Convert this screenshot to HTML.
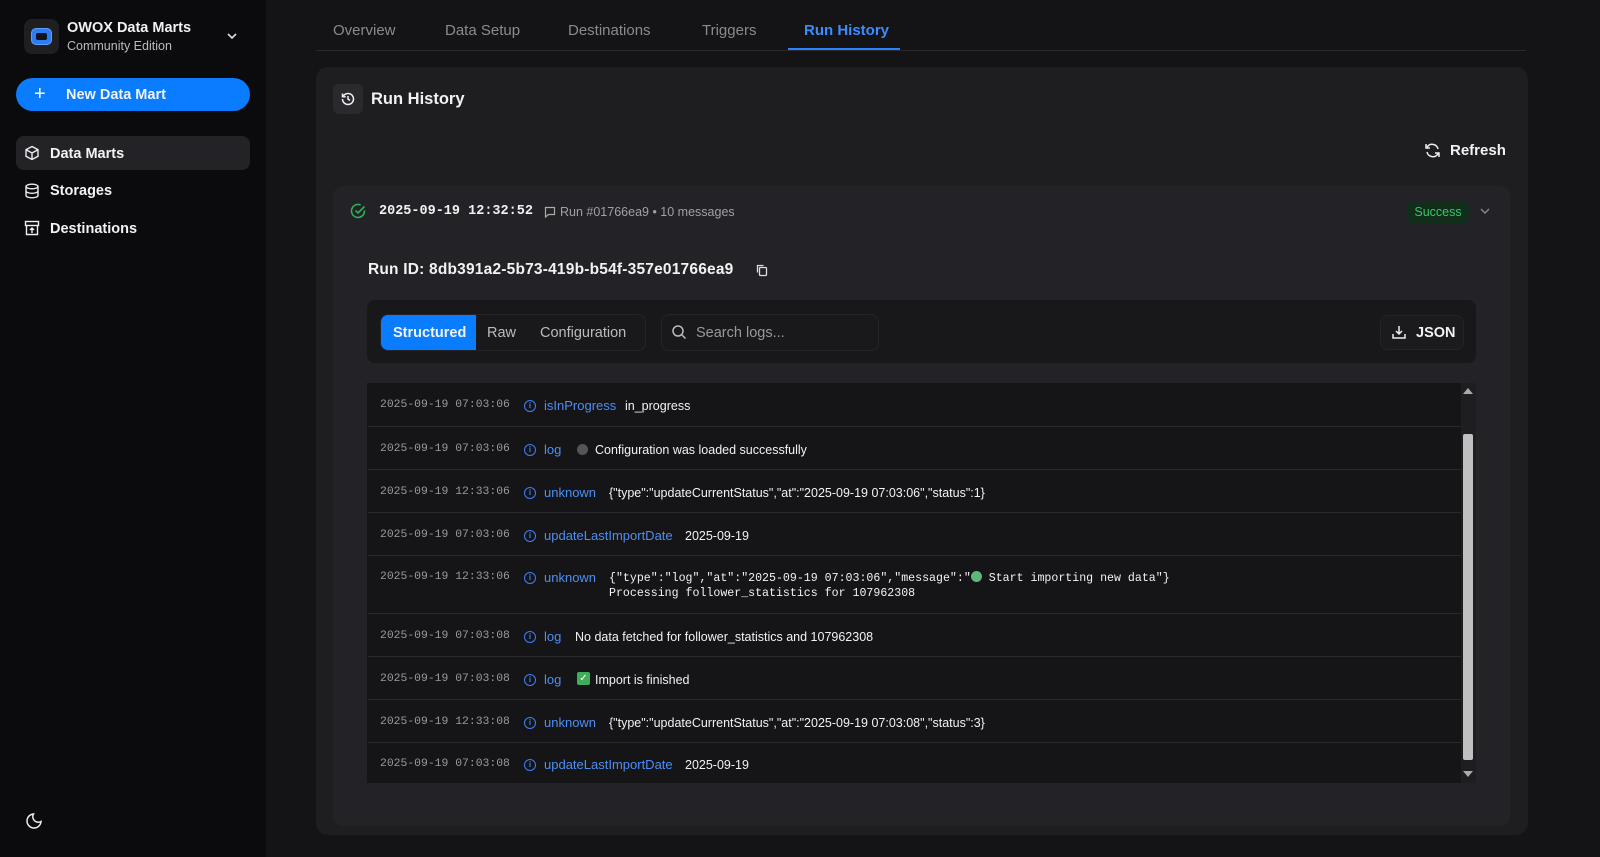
<!DOCTYPE html>
<html><head><meta charset="utf-8"><style>
*{box-sizing:border-box;margin:0;padding:0}
body{width:1600px;height:857px;background:#141316;font-family:"Liberation Sans",sans-serif;color:#f2f2f2;position:relative;overflow:hidden;font-size:14px}
.sb{position:absolute;left:0;top:0;width:266px;height:857px;background:#0b0a0c}
.abs{position:absolute}
.mono{font-family:"Liberation Mono",monospace}
.tab{position:absolute;top:22px;font-size:15px;color:#8a8a90}
.row{position:absolute;left:368px;width:1093px;border-top:1px solid #2a292d;font-size:12px}
.ts{position:absolute;left:12px;color:#9a9aa0;font-family:"Liberation Mono",monospace;font-size:11.4px}
.ic{position:absolute;left:156px;width:12px;height:12px;border:1.2px solid #3b82f6;border-radius:50%;color:#3b82f6;font-size:8px;line-height:10px;text-align:center;font-weight:bold}
.ty{position:absolute;color:#4c8ff5;font-size:13px}
.msg{position:absolute;color:#f2f2f2;font-size:12.5px}
</style></head><body>
<div class="sb">
 <div class="abs" style="left:24px;top:19px;width:35px;height:35px;background:#1f1e21;border-radius:8px"><div class="abs" style="left:7px;top:9px;width:21px;height:17px;border-radius:5px;background:#2f7cf0;border:1px solid #5aa0ff"><div class="abs" style="left:4px;top:4px;width:11px;height:7px;background:#0e1420;border-radius:2px"></div></div></div>
 <div class="abs" style="left:67px;top:20px;font-weight:bold;font-size:14.5px">OWOX Data Marts</div>
 <div class="abs" style="left:67px;top:39px;font-size:12.5px;color:#bbb">Community Edition</div>
 <svg class="abs" style="left:226px;top:31px" width="12" height="10"><path d="M2 3l4 4 4-4" stroke="#ddd" stroke-width="1.6" fill="none"/></svg>
 <div class="abs" style="left:16px;top:78px;width:234px;height:33px;background:#0a7cff;border-radius:17px"></div>
 <div class="abs" style="left:34px;top:83px;font-size:20px;color:#fff">+</div>
 <div class="abs" style="left:66px;top:87px;font-size:14.5px;font-weight:bold">New Data Mart</div>
 <div class="abs" style="left:16px;top:136px;width:234px;height:34px;background:#232226;border-radius:8px"></div>
 <svg class="abs" style="left:24px;top:145px" width="16" height="16" fill="none" stroke="#eee" stroke-width="1.4"><path d="M8 1.5l6 3.2v6.6L8 14.5 2 11.3V4.7z M2 4.7l6 3.3 6-3.3 M8 8v6.5"/></svg>
 <div class="abs" style="left:50px;top:146px;font-weight:bold;font-size:14.5px">Data Marts</div>
 <svg class="abs" style="left:24px;top:183px" width="16" height="16" fill="none" stroke="#eee" stroke-width="1.4"><ellipse cx="8" cy="3.5" rx="6" ry="2.3"/><path d="M2 3.5v9c0 1.3 2.7 2.3 6 2.3s6-1 6-2.3v-9M2 8c0 1.3 2.7 2.3 6 2.3s6-1 6-2.3"/></svg>
 <div class="abs" style="left:50px;top:183px;font-weight:bold;font-size:14.5px">Storages</div>
 <svg class="abs" style="left:24px;top:220px" width="16" height="16" fill="none" stroke="#eee" stroke-width="1.4"><rect x="1.5" y="1.5" width="13" height="4"/><path d="M2.5 5.5v9h11v-9M8 13V8M6 10l2-2 2 2"/></svg>
 <div class="abs" style="left:50px;top:221px;font-weight:bold;font-size:14.5px">Destinations</div>
 <svg class="abs" style="left:26px;top:811px" width="18" height="18" fill="none" stroke="#eee" stroke-width="1.5"><path d="M15 10.5A7 7 0 1 1 7.5 3a5.5 5.5 0 0 0 7.5 7.5z"/></svg>
</div>
<div class="tab" style="left:333px">Overview</div>
<div class="tab" style="left:445px">Data Setup</div>
<div class="tab" style="left:568px">Destinations</div>
<div class="tab" style="left:702px">Triggers</div>
<div class="tab" style="left:804px;color:#3b8cff;font-weight:bold">Run History</div>
<div class="abs" style="left:316px;top:50px;width:1210px;height:1px;background:#2a292d"></div>
<div class="abs" style="left:788px;top:48px;width:112px;height:2px;background:#2f80ff"></div>
<div class="abs" style="left:316px;top:67px;width:1212px;height:768px;background:#1e1d20;border-radius:12px"></div>
<div class="abs" style="left:333px;top:84px;width:30px;height:30px;background:#2a292d;border-radius:6px"></div>
<svg class="abs" style="left:340px;top:91px" width="16" height="16" fill="none" stroke="#eee" stroke-width="1.5"><path d="M2.5 8a5.5 5.5 0 1 0 1.6-3.9L2.5 5.7M2.5 2.5v3.2h3.2M8 5v3l2 1.5"/></svg>
<div class="abs" style="left:371px;top:90px;font-size:16.5px;font-weight:bold">Run History</div>
<svg class="abs" style="left:1424px;top:142px" width="17" height="17" fill="none" stroke="#eee" stroke-width="1.5"><path d="M14 7A6 6 0 0 0 3.5 4.5L2 6M2 2v4h4M3 10a6 6 0 0 0 10.5 2.5L15 11M15 15v-4h-4"/></svg>
<div class="abs" style="left:1450px;top:142px;font-weight:bold;font-size:15px">Refresh</div>
<div class="abs" style="left:333px;top:186px;width:1177px;height:640px;background:#232226;border-radius:10px"></div>
<svg class="abs" style="left:350px;top:203px" width="16" height="16" fill="none" stroke="#2fb15a" stroke-width="1.6"><path d="M14.5 7.5V8A6.5 6.5 0 1 1 10.6 2"/><path d="M5.5 7.5l2.5 2.5 6.5-6.5"/></svg>
<div class="abs mono" style="left:379px;top:204px;font-size:13.5px;font-weight:bold">2025-09-19 12:32:52</div>
<svg class="abs" style="left:544px;top:206px" width="12" height="12" fill="none" stroke="#aaa" stroke-width="1.2"><path d="M1.5 1.5h9v7h-6l-3 2.5z"/></svg>
<div class="abs" style="left:560px;top:205px;font-size:12.5px;color:#a0a0a6">Run #01766ea9 • 10 messages</div>
<div class="abs" style="left:1407px;top:202px;width:62px;height:21px;background:#112e1b;border-radius:6px;color:#3dc46a;font-size:12.5px;text-align:center;line-height:21px">Success</div>
<svg class="abs" style="left:1479px;top:206px" width="12" height="10"><path d="M2 3l4 4 4-4" stroke="#888" stroke-width="1.4" fill="none"/></svg>
<div class="abs" style="left:368px;top:261px;font-size:15.5px;font-weight:bold;letter-spacing:0.2px">Run ID: 8db391a2-5b73-419b-b54f-357e01766ea9</div>
<svg class="abs" style="left:755px;top:263px" width="14" height="14" fill="none" stroke="#ddd" stroke-width="1.3"><rect x="4.5" y="4.5" width="7" height="8" rx="1"/><path d="M2.5 9.5v-7h6"/></svg>
<div class="abs" style="left:367px;top:300px;width:1109px;height:63px;background:#18171a;border-radius:8px"></div>
<div class="abs" style="left:380px;top:314px;width:266px;height:37px;border:1px solid #252428;border-radius:8px;background:#19181b"></div>
<div class="abs" style="left:381px;top:315px;width:95px;height:35px;background:#0a7cff;border-radius:7px 0 0 7px"></div>
<div class="abs" style="left:393px;top:325px;font-weight:bold;font-size:14.5px">Structured</div>
<div class="abs" style="left:487px;top:325px;font-size:14.5px;color:#bbb">Raw</div>
<div class="abs" style="left:540px;top:325px;font-size:14.5px;color:#bbb">Configuration</div>
<div class="abs" style="left:661px;top:314px;width:218px;height:37px;border:1px solid #252428;border-radius:8px;background:#19181b"></div>
<svg class="abs" style="left:671px;top:324px" width="16" height="16" fill="none" stroke="#bbb" stroke-width="1.5"><circle cx="7" cy="7" r="5"/><path d="M11 11l3.5 3.5"/></svg>
<div class="abs" style="left:696px;top:325px;font-size:14.5px;color:#999">Search logs...</div>
<div class="abs" style="left:1380px;top:315px;width:84px;height:35px;border:1px solid #252428;border-radius:8px;background:#1b1a1d"></div>
<svg class="abs" style="left:1391px;top:324px" width="16" height="16" fill="none" stroke="#eee" stroke-width="1.5"><path d="M8 2v8M5 7l3 3 3-3M2 10v4h12v-4"/></svg>
<div class="abs" style="left:1416px;top:325px;font-weight:bold;font-size:14.5px">JSON</div>
<div class="abs" style="left:367px;top:383px;width:1109px;height:400px;background:#151417"></div>
<div class="abs" style="left:1461px;top:383px;width:15px;height:400px;background:#1e1d20"></div>
<div class="abs" style="left:1463px;top:434px;width:10px;height:326px;background:#c0c0c0;border-radius:2px"></div>
<svg class="abs" style="left:1463px;top:387px" width="10" height="8"><path d="M0 7l5-6 5 6z" fill="#aaa"/></svg>
<svg class="abs" style="left:1463px;top:770px" width="10" height="8"><path d="M0 1l5 6 5-6z" fill="#aaa"/></svg>

<div class="row" style="top:383px;height:43px;border:0"><span class="ts" style="top:16px">2025-09-19 07:03:06</span><span class="ic" style="top:17px">i</span><span class="ty" style="left:176px;top:15px">isInProgress</span><span class="msg" style="left:257px;top:16px">in_progress</span></div>
<div class="row" style="top:426px;height:43px"><span class="ts" style="top:16px">2025-09-19 07:03:06</span><span class="ic" style="top:17px">i</span><span class="ty" style="left:176px;top:15px">log</span><span class="abs" style="left:209px;top:17px;width:11px;height:11px;border-radius:50%;background:#555"></span><span class="msg" style="left:227px;top:16px">Configuration was loaded successfully</span></div>
<div class="row" style="top:469px;height:43px"><span class="ts" style="top:16px">2025-09-19 12:33:06</span><span class="ic" style="top:17px">i</span><span class="ty" style="left:176px;top:15px">unknown</span><span class="msg" style="left:241px;top:16px">{"type":"updateCurrentStatus","at":"2025-09-19 07:03:06","status":1}</span></div>
<div class="row" style="top:512px;height:43px"><span class="ts" style="top:16px">2025-09-19 07:03:06</span><span class="ic" style="top:17px">i</span><span class="ty" style="left:176px;top:15px">updateLastImportDate</span><span class="msg" style="left:317px;top:16px">2025-09-19</span></div>
<div class="row" style="top:555px;height:58px"><span class="ts" style="top:15px">2025-09-19 12:33:06</span><span class="ic" style="top:16px">i</span><span class="ty" style="left:176px;top:14px">unknown</span><span class="msg mono" style="left:241px;top:15px;font-size:11.6px;line-height:15px;white-space:pre">{"type":"log","at":"2025-09-19 07:03:06","message":"<span style="display:inline-block;width:11px;height:11px;border-radius:50%;background:#5cb87a;vertical-align:-1px"></span> Start importing new data"}
Processing follower_statistics for 107962308</span></div>
<div class="row" style="top:613px;height:43px"><span class="ts" style="top:16px">2025-09-19 07:03:08</span><span class="ic" style="top:17px">i</span><span class="ty" style="left:176px;top:15px">log</span><span class="msg" style="left:207px;top:16px">No data fetched for follower_statistics and 107962308</span></div>
<div class="row" style="top:656px;height:43px"><span class="ts" style="top:16px">2025-09-19 07:03:08</span><span class="ic" style="top:17px">i</span><span class="ty" style="left:176px;top:15px">log</span><span class="abs" style="left:209px;top:15px;width:13px;height:13px;border-radius:2px;background:#3fae5a;color:#fff;font-size:10px;text-align:center;line-height:13px">✓</span><span class="msg" style="left:227px;top:16px">Import is finished</span></div>
<div class="row" style="top:699px;height:43px"><span class="ts" style="top:16px">2025-09-19 12:33:08</span><span class="ic" style="top:17px">i</span><span class="ty" style="left:176px;top:15px">unknown</span><span class="msg" style="left:241px;top:16px">{"type":"updateCurrentStatus","at":"2025-09-19 07:03:08","status":3}</span></div>
<div class="row" style="top:742px;height:41px"><span class="ts" style="top:15px">2025-09-19 07:03:08</span><span class="ic" style="top:16px">i</span><span class="ty" style="left:176px;top:14px">updateLastImportDate</span><span class="msg" style="left:317px;top:15px">2025-09-19</span></div>
</body></html>
